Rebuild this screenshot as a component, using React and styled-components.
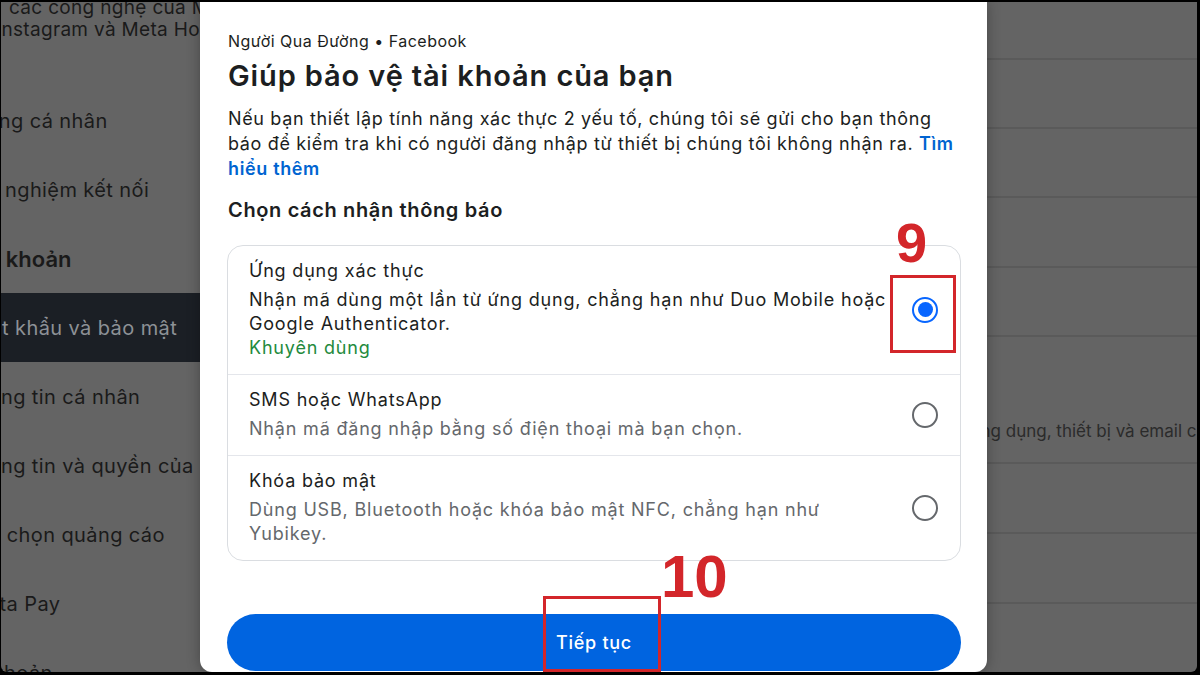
import styled, { createGlobalStyle } from "styled-components";

const GlobalStyle = createGlobalStyle`
  html, body {
    margin: 0;
    padding: 0;
    background: #000;
  }
  body {
    font-family: Inter, "Noto Sans", "Liberation Sans", sans-serif;
  }
  * {
    box-sizing: border-box;
  }
`;

const sideItems = [
  { text: "Trang cá nhân", shift: -34 },
  { text: "Trải nghiệm kết nối", shift: -39 },
  { text: "Tài khoản", shift: -32, heading: true },
  { text: "Mật khẩu và bảo mật", shift: -29, active: true },
  { text: "Thông tin cá nhân", shift: -38 },
  { text: "Thông tin và quyền của bạn", shift: -38 },
  { text: "Tùy chọn quảng cáo", shift: -36 },
  { text: "Meta Pay", shift: -32 },
  { text: "Tài khoản", shift: -43 },
];

const paneRows = [58, 69, 69, 70, 69, 127, 70, 70, 70];

const options = [
  {
    title: "Ứng dụng xác thực",
    desc: "Nhận mã dùng một lần từ ứng dụng, chẳng hạn như Duo Mobile hoặc Google Authenticator.",
    note: "Khuyên dùng",
    checked: true,
  },
  {
    title: "SMS hoặc WhatsApp",
    desc: "Nhận mã đăng nhập bằng số điện thoại mà bạn chọn.",
  },
  {
    title: "Khóa bảo mật",
    desc: "Dùng USB, Bluetooth hoặc khóa bảo mật NFC, chẳng hạn như Yubikey.",
  },
];

const App = () => {
  return (
    <>
      <GlobalStyle />
      <Frame>
        <Screen>
          <Sidebar>
            <Intro>
              <IntroLine shift={8}>các công nghệ của Meta, như Facebook,</IntroLine>
              <IntroLine shift={-5}>Instagram và Meta Horizon</IntroLine>
            </Intro>
            {sideItems.map((item, i) => (
              <NavItem key={i} active={item.active} heading={item.heading}>
                <NavLabel shift={item.shift}>{item.text}</NavLabel>
              </NavItem>
            ))}
          </Sidebar>

          <Modal>
            <Account>Người Qua Đường • Facebook</Account>
            <Title>Giúp bảo vệ tài khoản của bạn</Title>
            <Body>
              Nếu bạn thiết lập tính năng xác thực 2 yếu tố, chúng tôi sẽ gửi
              cho bạn thông báo để kiểm tra khi có người đăng nhập từ thiết bị
              chúng tôi không nhận ra. <Link>Tìm hiểu thêm</Link>
            </Body>
            <SectionTitle>Chọn cách nhận thông báo</SectionTitle>

            <OptionList>
              {options.map((opt) => (
                <Option key={opt.title}>
                  <OptionText>
                    <OptionTitle>{opt.title}</OptionTitle>
                    <OptionDesc checked={opt.checked}>{opt.desc}</OptionDesc>
                    {opt.note && <OptionNote>{opt.note}</OptionNote>}
                  </OptionText>
                  <Radio checked={opt.checked} />
                </Option>
              ))}
            </OptionList>

            <ContinueButton>Tiếp tục</ContinueButton>

            <StepNumber top={213} left={696} size={56}>9</StepNumber>
            <Marker top={273} left={690} width={66} height={78} />
            <StepNumber top={545} left={461} size={60}>10</StepNumber>
            <Marker top={594} left={343} width={118} height={76} />
          </Modal>

          <RightPane>
            {paneRows.map((h, i) => (
              <PaneRow key={i} h={h} last={i === paneRows.length - 1}>
                {i === 5 && (
                  <PaneText>Quản lý ứng dụng, thiết bị và email của bạn</PaneText>
                )}
              </PaneRow>
            ))}
          </RightPane>
        </Screen>
      </Frame>
    </>
  );
};

const Frame = styled.div`
  width: 1200px;
  height: 675px;
  padding: 2px 3px 3px 1px;
  background: #000;
  overflow: hidden;
`;

const Screen = styled.div`
  height: 100%;
  display: grid;
  grid-template-columns: 199px 787px 1fr;
  background: #646464;
  border-radius: 0 0 6px 6px;
  overflow: hidden;
`;

/* left, dimmed settings menu */
const Sidebar = styled.div`
  display: flex;
  flex-direction: column;
  min-width: 0;
  overflow: hidden;
  letter-spacing: 0.02em;
`;

const Intro = styled.div`
  flex: 0 0 89px;
  margin-top: -5px;
  font-size: 19px;
  line-height: 22px;
  color: #1a1a1a;
`;

const IntroLine = styled.div`
  white-space: nowrap;
  margin-left: ${({ shift }) => shift}px;
`;

const NavItem = styled.div`
  flex: 0 0 69px;
  display: flex;
  align-items: center;
  white-space: nowrap;
  font-size: ${({ heading }) => (heading ? "22px" : "20px")};
  font-weight: ${({ heading }) => (heading ? 600 : 400)};
  letter-spacing: ${({ heading }) => (heading ? "0" : "0.02em")};
  color: ${({ active }) => (active ? "#8d9196" : "#1a1a1a")};
  background: ${({ active }) => (active ? "#1b1f25" : "transparent")};
`;

const NavLabel = styled.span`
  margin-left: ${({ shift }) => shift}px;
`;

/* dialog */
const Modal = styled.div`
  position: relative;
  z-index: 1;
  display: flex;
  flex-direction: column;
  padding: 29px 26px 0 27px;
  background: #fff;
  border-radius: 0 0 12px 12px;
  box-shadow: 0 0 14px rgba(0, 0, 0, 0.3);
  color: #1c1e21;
  letter-spacing: 0.04em;
`;

const Account = styled.div`
  padding-left: 1px;
  font-size: 16px;
  line-height: 20px;
  letter-spacing: 0.03em;
`;

const Title = styled.h1`
  margin: 7px 0 0;
  padding-left: 1px;
  font-size: 29px;
  line-height: 36px;
  font-weight: 600;
  letter-spacing: 0.03em;
`;

const Body = styled.p`
  margin: 12px -4px 0 0;
  padding-left: 1px;
  font-size: 18px;
  line-height: 25px;
`;

const Link = styled.span`
  color: #0064d1;
  font-weight: 600;
`;

const SectionTitle = styled.h2`
  margin: 16px 0 0;
  padding-left: 1px;
  font-size: 20px;
  line-height: 26px;
  font-weight: 600;
`;

const OptionList = styled.div`
  margin-top: 22px;
  border: 1px solid #dadde1;
  border-radius: 16px;
  overflow: hidden;
`;

const Option = styled.label`
  display: flex;
  align-items: center;
  gap: 16px;
  padding: 13px 22px 14px 21px;

  & + & {
    border-top: 1px solid #e4e6eb;
  }
`;

const OptionText = styled.div`
  flex: 1;
  padding-right: 6px;
  font-size: 18px;
  line-height: 24px;
  letter-spacing: 0.045em;
`;

const OptionTitle = styled.div`
  margin-bottom: 5px;
  color: #1c1e21;
`;

const OptionDesc = styled.div`
  color: ${({ checked }) => (checked ? "#1c1e21" : "#65686c")};
`;

const OptionNote = styled.div`
  color: #238a3d;
`;

const Radio = styled.span`
  flex: 0 0 26px;
  height: 26px;
  display: flex;
  align-items: center;
  justify-content: center;
  border-radius: 50%;
  border: 2px solid ${({ checked }) => (checked ? "#0866ff" : "#65686c")};

  &::after {
    content: "";
    width: 15px;
    height: 15px;
    border-radius: 50%;
    background: ${({ checked }) => (checked ? "#0866ff" : "transparent")};
  }
`;

const ContinueButton = styled.button`
  margin-top: 53px;
  height: 57px;
  border: none;
  border-radius: 29px;
  background: #0064e0;
  color: #fff;
  font-family: inherit;
  font-size: 18px;
  font-weight: 500;
  letter-spacing: 0.04em;
`;

/* red tutorial annotations drawn over the screenshot */
const StepNumber = styled.div`
  position: absolute;
  top: ${({ top }) => top}px;
  left: ${({ left }) => left}px;
  font-family: "Liberation Sans", Arial, sans-serif;
  font-size: ${({ size }) => size}px;
  line-height: 1;
  font-weight: 700;
  letter-spacing: 0;
  color: #d3262a;
`;

const Marker = styled.div`
  position: absolute;
  top: ${({ top }) => top}px;
  left: ${({ left }) => left}px;
  width: ${({ width }) => width}px;
  height: ${({ height }) => height}px;
  border: 3px solid #d3262a;
`;

/* right, dimmed page */
const RightPane = styled.div`
  display: flex;
  flex-direction: column;
  min-width: 0;
  overflow: hidden;
`;

const PaneRow = styled.div`
  flex: 0 0 ${({ h }) => h}px;
  display: flex;
  align-items: flex-end;
  padding-bottom: 19px;
  border-bottom: ${({ last }) => (last ? "none" : "2px solid #5a5a5a")};
`;

const PaneText = styled.div`
  margin-left: -83px;
  white-space: nowrap;
  font-size: 17px;
  line-height: 24px;
  color: #2b2b2b;
`;

export default App;
